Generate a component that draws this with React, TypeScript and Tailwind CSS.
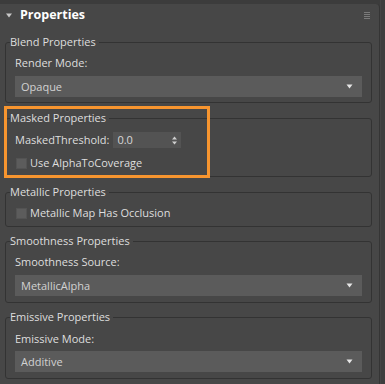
import React from "react";

const font = { fontFamily: '"Open Sans", "Noto Sans", sans-serif' };

function Arrow() {
  return (
    <svg width="7" height="5" viewBox="0 0 7 5" className="shrink-0">
      <path d="M0.5 0.5 H6.5 L3.5 4.5 Z" fill="#e6e6e6" />
    </svg>
  );
}

function Dropdown({ value }: { value: string }) {
  return (
    <div className="mx-[9px] h-[21px] bg-[#5b5b5b] flex items-center justify-between pl-[6px] pr-[9px] text-[#d2d2d2]">
      <span className="leading-[16px]">{value}</span>
      <Arrow />
    </div>
  );
}

function Checkbox() {
  return <div className="w-[11px] h-[11px] bg-[#5c5c5c] border border-[#535353] shrink-0" />;
}

function Group({
  title,
  children,
  className = "",
}: {
  title: string;
  children: React.ReactNode;
  className?: string;
}) {
  return (
    <fieldset
      className={`ml-[5px] w-[367px] border border-[#333333] rounded-[3px] ${className}`}
    >
      <legend className="ml-[4px] pr-[3px] leading-[16px] text-[#dedede]">{title}</legend>
      {children}
    </fieldset>
  );
}

export default function App() {
  return (
    <div
      className="w-[385px] h-[384px] bg-[#3c3c3c] flex overflow-hidden text-[11px]"
      style={font}
    >
      <div className="relative w-[380px] mt-[4px] bg-[#474747] rounded-tr-[4px] border-r border-[#353535] flex flex-col">
        <div className="h-[22px] flex items-center pl-[6px] pr-[9px]">
          <svg width="6" height="5" viewBox="0 0 6 5" className="mr-[8px]">
            <path d="M0 0.5 H6 L3 4.5 Z" fill="#c8c8c8" />
          </svg>
          <span className="font-bold text-[12.5px] text-white leading-[16px]">Properties</span>
          <div className="ml-auto flex flex-col gap-[1px]">
            <div className="w-[6px] h-[1px] bg-[#7a7a7a]" />
            <div className="w-[6px] h-[1px] bg-[#7a7a7a]" />
            <div className="w-[6px] h-[1px] bg-[#7a7a7a]" />
            <div className="w-[6px] h-[1px] bg-[#7a7a7a]" />
          </div>
        </div>

        <Group title="Blend Properties" className="mt-[8px]">
          <div className="pt-[5px] pl-[9px] leading-[16px] text-[#dedede]">Render Mode:</div>
          <div className="mt-[5px] pb-[5px]">
            <Dropdown value="Opaque" />
          </div>
        </Group>

        <Group title="Masked Properties" className="mt-[7px]">
          <div className="mt-[6px] pl-[9px] flex items-center h-[16px]">
            <span className="text-[#dedede] leading-[16px]">MaskedThreshold:</span>
            <div className="ml-[4px] w-[68px] h-[16px] bg-[#535353] flex items-center justify-between pl-[4px] pr-[4px] text-[#d8d8d8]">
              <span className="leading-[16px]">0.0</span>
              <svg width="5" height="9" viewBox="0 0 5 9">
                <path d="M0 3.5 L2.5 0.5 L5 3.5 Z" fill="#cfcfcf" />
                <path d="M0 5.5 L2.5 8.5 L5 5.5 Z" fill="#cfcfcf" />
              </svg>
            </div>
          </div>
          <div className="mt-[7px] pl-[10px] flex items-center h-[16px] gap-[3px]">
            <Checkbox />
            <span className="text-[#dedede] leading-[16px]">Use AlphaToCoverage</span>
          </div>
          <div className="h-[5px]" />
        </Group>

        <Group title="Metallic Properties" className="mt-[7px]">
          <div className="mt-[5px] pl-[10px] flex items-center h-[16px] gap-[3px]">
            <Checkbox />
            <span className="text-[#dedede] leading-[16px]">Metallic Map Has Occlusion</span>
          </div>
          <div className="h-[5px]" />
        </Group>

        <Group title="Smoothness Properties" className="mt-[6px]">
          <div className="pt-[5px] pl-[9px] leading-[16px] text-[#dedede]">Smoothness Source:</div>
          <div className="mt-[5px] pb-[6px]">
            <Dropdown value="MetallicAlpha" />
          </div>
        </Group>

        <Group title="Emissive Properties" className="mt-[6px]">
          <div className="pt-[6px] pl-[9px] leading-[16px] text-[#dedede]">Emissive Mode:</div>
          <div className="mt-[4px] pb-[6px]">
            <Dropdown value="Additive" />
          </div>
        </Group>

        <div className="absolute left-[4px] top-[102px] w-[206px] h-[72px] border-[3px] border-[#f7952f] pointer-events-none" />
      </div>
      <div className="w-[5px] bg-[#3e3e3e] border-l border-[#454545]" />
    </div>
  );
}
